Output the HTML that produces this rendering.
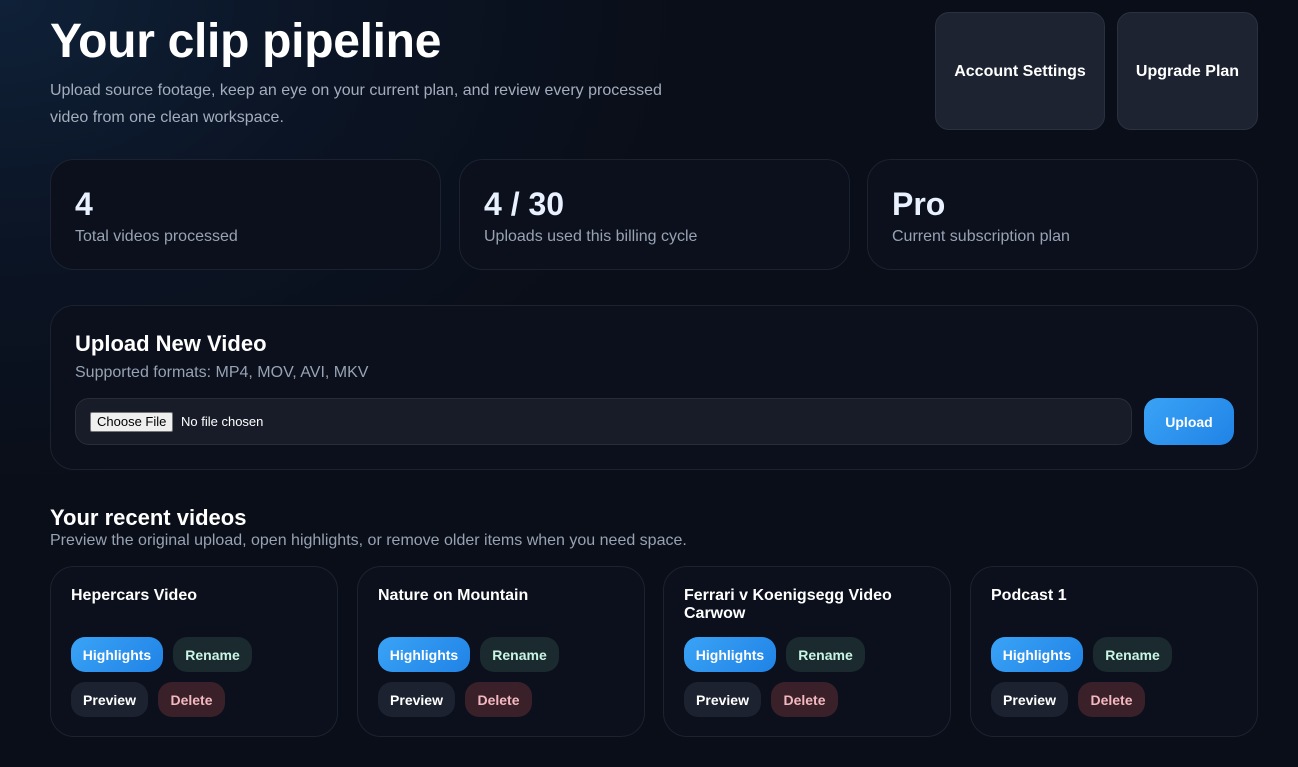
<!DOCTYPE html>
<html><head><meta charset="utf-8"><style>
*{box-sizing:border-box;margin:0;padding:0}
body{width:1298px;height:767px;overflow:hidden;font-family:"Liberation Sans",sans-serif;color:#fff;
background:radial-gradient(ellipse 700px 500px at 0 0,#0f2138 0%,#0b1424 50%,transparent 100%),#0a0e18;position:relative}
.abs{position:absolute}
h1{position:absolute;left:50px;top:14px;font-size:48px;font-weight:700;letter-spacing:-0.3px}
.sub{left:50px;top:77px;width:640px;font-size:16px;line-height:27px;color:#a3adbd}
.tb{top:12px;height:118px;background:#1d2331;border:1px solid #2a3140;border-radius:14px;display:flex;align-items:center;justify-content:center;font-weight:700;font-size:16px;padding-top:2px}
.card{background:#0b101c;border:1px solid #1c2230;border-radius:24px}
.stat{top:159px;height:111px;width:391px}
.stat b{position:absolute;left:24px;top:26px;font-size:32px;color:#e9f1ff}
.stat span{position:absolute;left:24px;top:68px;font-size:16px;color:#97a2b3}
.vc{top:566px;width:288px;height:171px}
.vc .t{position:absolute;left:20px;top:20px;font-size:16px;font-weight:700;line-height:18px;width:240px}
.btn{position:absolute;height:35px;border-radius:14px;font-size:14px;font-weight:700;display:flex;align-items:center;justify-content:center}
.hl{left:20px;top:70px;width:92px;background:linear-gradient(135deg,#3aa3f6,#2083e6)}
.rn{left:122px;top:70px;width:79px;background:#1a2a2e;color:#c9f5e4}
.pv{left:20px;top:115px;width:77px;background:#1c2230}
.dl{left:107px;top:115px;width:67px;background:#3a2028;color:#f3b8c0}
</style></head><body>
<h1>Your clip pipeline</h1>
<div class="abs sub">Upload source footage, keep an eye on your current plan, and review every processed video from one clean workspace.</div>
<div class="abs tb" style="left:935px;width:170px">Account Settings</div>
<div class="abs tb" style="left:1117px;width:141px">Upgrade Plan</div>

<div class="abs card stat" style="left:50px"><b>4</b><span>Total videos processed</span></div>
<div class="abs card stat" style="left:459px"><b>4 / 30</b><span>Uploads used this billing cycle</span></div>
<div class="abs card stat" style="left:867px"><b>Pro</b><span>Current subscription plan</span></div>

<div class="abs card" style="left:50px;top:305px;width:1208px;height:165px">
<div class="abs" style="left:24px;top:25px;font-size:22px;font-weight:700">Upload New Video</div>
<div class="abs" style="left:24px;top:58px;font-size:16px;color:#97a2b3">Supported formats: MP4, MOV, AVI, MKV</div>
<div class="abs" style="left:24px;top:92px;width:1057px;height:47px;background:#171c28;border:1px solid #262d3b;border-radius:14px">
<div class="abs" style="left:14px;top:13px;height:20px;padding:0 6px;background:#efefef;border:1px solid #767676;border-radius:2px;color:#000;font-size:13px;line-height:18px">Choose File</div>
<div class="abs" style="left:105px;top:15px;font-size:13px;color:#fff">No file chosen</div>
</div>
<div class="abs" style="left:1093px;top:92px;width:90px;height:47px;border-radius:14px;background:linear-gradient(135deg,#3aa3f6,#2083e6);display:flex;align-items:center;justify-content:center;font-size:14px;font-weight:700">Upload</div>
</div>

<div class="abs" style="left:50px;top:505px;font-size:22px;font-weight:700">Your recent videos</div>
<div class="abs" style="left:50px;top:532px;font-size:16px;color:#97a2b3">Preview the original upload, open highlights, or remove older items when you need space.</div>

<div class="abs card vc" style="left:50px"><div class="t">Hepercars Video</div><div class="btn hl">Highlights</div><div class="btn rn">Rename</div><div class="btn pv">Preview</div><div class="btn dl">Delete</div></div>
<div class="abs card vc" style="left:357px"><div class="t">Nature on Mountain</div><div class="btn hl">Highlights</div><div class="btn rn">Rename</div><div class="btn pv">Preview</div><div class="btn dl">Delete</div></div>
<div class="abs card vc" style="left:663px"><div class="t">Ferrari v Koenigsegg Video Carwow</div><div class="btn hl">Highlights</div><div class="btn rn">Rename</div><div class="btn pv">Preview</div><div class="btn dl">Delete</div></div>
<div class="abs card vc" style="left:970px"><div class="t">Podcast 1</div><div class="btn hl">Highlights</div><div class="btn rn">Rename</div><div class="btn pv">Preview</div><div class="btn dl">Delete</div></div>
</body></html>
